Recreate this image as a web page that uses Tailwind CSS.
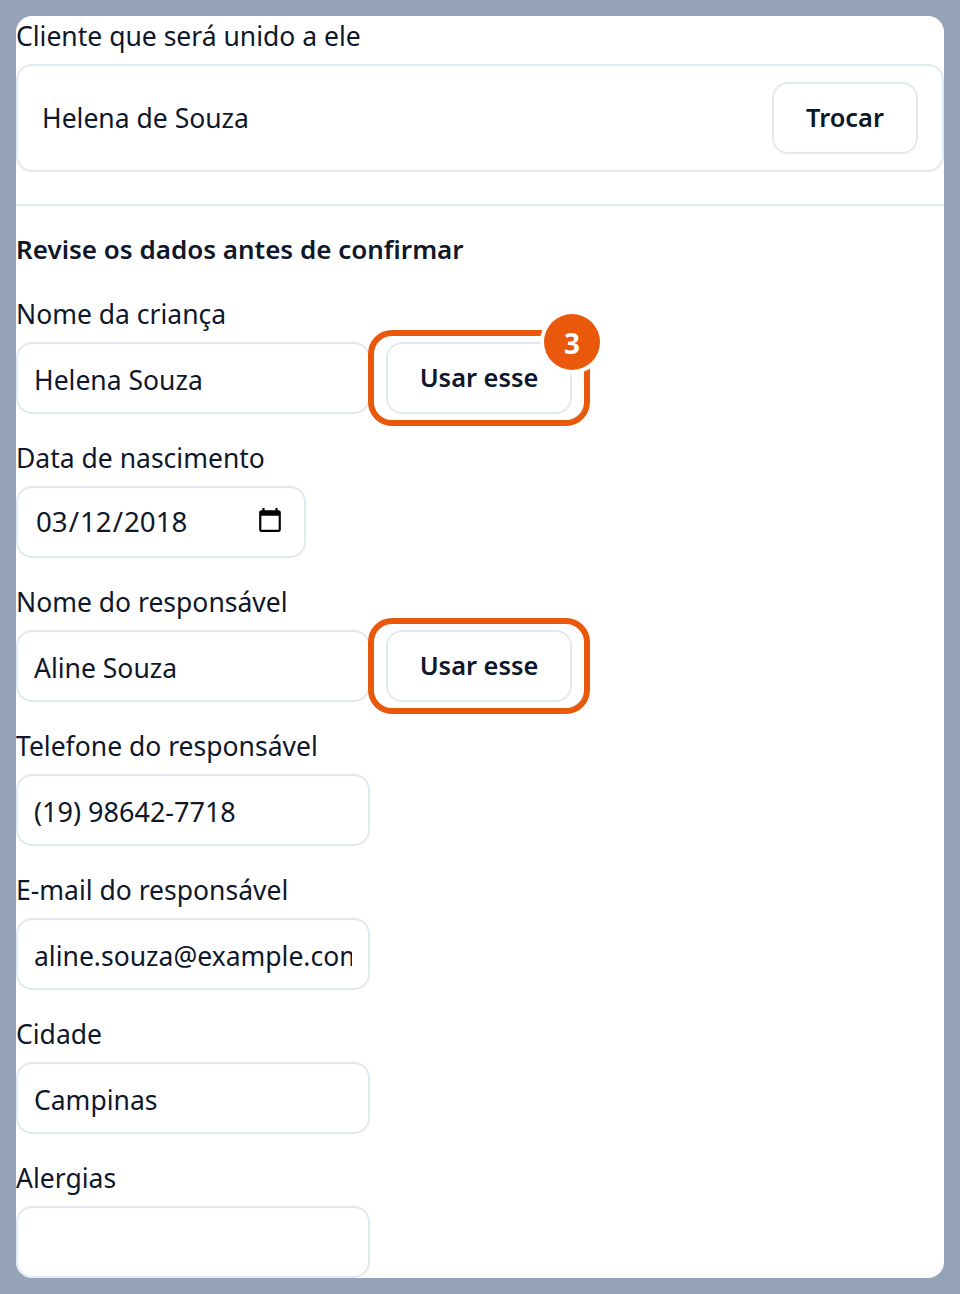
<!DOCTYPE html>
<html lang="pt-BR">
<head>
  <meta charset="UTF-8" />
  <title>Unir clientes</title>
  <script src="https://cdn.jsdelivr.net/npm/@tailwindcss/browser@4"></script>
</head>
<body class="bg-[#94a3b8] p-4 h-[1294px] overflow-hidden font-['Noto_Sans',sans-serif] text-[26.5px] leading-[42px] text-[#0f172a]">
  <main class="bg-white rounded-2xl h-[1262px] overflow-hidden">

    <!-- cliente -->
    <label class="block mb-1.5 -mt-px pb-px">Cliente que será unido a ele</label>
    <div class="flex items-center justify-between border-2 border-[#e2e8f0] rounded-2xl px-6 py-4">
      <span>Helena de Souza</span>
      <button class="h-[72px] w-[146px] pb-0.5 border-2 border-[#e2e8f0] rounded-2xl font-semibold text-[25.4px] bg-white">Trocar</button>
    </div>
    <hr class="mt-8 mb-6 border-t-2 border-[#e2e8f0]" />

    <h3 class="-mt-0.5 font-semibold text-[26px] mb-6">Revise os dados antes de confirmar</h3>

    <div class="flex flex-col gap-6">
      <div>
        <label class="block mb-[7px] -mt-px">Nome da criança</label>
        <div class="flex gap-4">
          <input type="text" value="Helena Souza" class="w-[354px] h-[72px] px-4 pt-1 border-2 border-[#e2e8f0] rounded-2xl" />
          <div class="relative">
            <button class="h-[72px] w-[186px] pb-0.5 border-2 border-[#e2e8f0] rounded-2xl font-semibold text-[25.4px] bg-white">Usar esse</button>
            <div class="absolute -inset-x-[18px] -inset-y-3 border-[6px] border-[#ea580c] rounded-[24px] pointer-events-none"></div>
            <span class="absolute -right-7 -top-7 w-14 h-14 pt-0.5 rounded-full bg-[#ea580c] text-white text-[28px] font-bold flex items-center justify-center shadow-[0_0_0_4px_#fff]">3</span>
          </div>
        </div>
      </div>

      <div>
        <label class="block mb-[7px] -mt-px">Data de nascimento</label>
        <input type="date" value="2018-03-12" class="block w-[290px] h-[72px] pl-[17px] pr-[18px] pb-0.5 text-[27.7px] border-2 border-[#e2e8f0] rounded-2xl" />
      </div>

      <div>
        <label class="block mb-[7px] -mt-px">Nome do responsável</label>
        <div class="flex gap-4">
          <input type="text" value="Aline Souza" class="w-[354px] h-[72px] px-4 pt-1 border-2 border-[#e2e8f0] rounded-2xl" />
          <div class="relative">
            <button class="h-[72px] w-[186px] pb-0.5 border-2 border-[#e2e8f0] rounded-2xl font-semibold text-[25.4px] bg-white">Usar esse</button>
            <div class="absolute -inset-x-[18px] -inset-y-3 border-[6px] border-[#ea580c] rounded-[24px] pointer-events-none"></div>
          </div>
        </div>
      </div>

      <div>
        <label class="block mb-[7px] -mt-px">Telefone do responsável</label>
        <input type="text" value="(19) 98642-7718" class="block w-[354px] h-[72px] px-4 pt-0.5 text-[27px] border-2 border-[#e2e8f0] rounded-2xl" />
      </div>

      <div>
        <label class="block mb-[7px] -mt-px">E-mail do responsável</label>
        <input type="text" value="aline.souza@example.com" class="block w-[354px] h-[72px] px-4 pt-1 border-2 border-[#e2e8f0] rounded-2xl" />
      </div>

      <div>
        <label class="block mb-[7px] -mt-px">Cidade</label>
        <input type="text" value="Campinas" class="block w-[354px] h-[72px] px-4 pt-1 border-2 border-[#e2e8f0] rounded-2xl" />
      </div>

      <div>
        <label class="block mb-[7px] -mt-px">Alergias</label>
        <input type="text" class="block w-[354px] h-[72px] px-4 pt-1 border-2 border-[#e2e8f0] rounded-2xl" />
      </div>
    </div>
  </main>
</body>
</html>
